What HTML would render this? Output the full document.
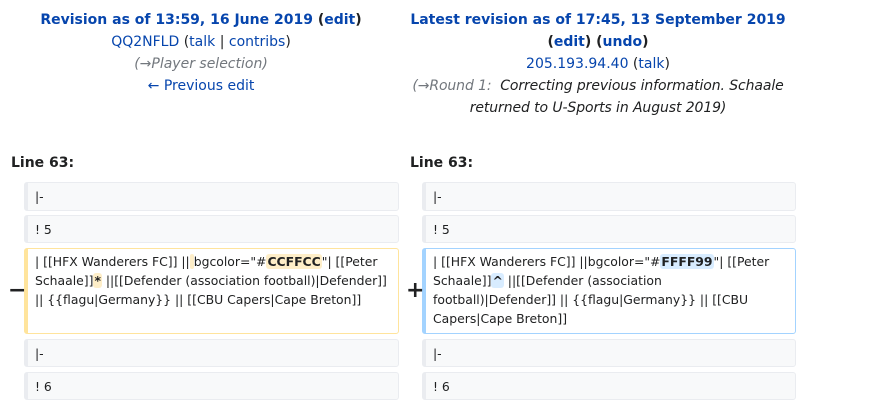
<!DOCTYPE html>
<html><head><meta charset="utf-8"><style>
body{margin:0;width:874px;height:404px;background:#fff;font-family:"DejaVu Sans","Liberation Sans",sans-serif;color:#202122;position:relative;overflow:hidden}
.h{position:absolute;text-align:center;font-size:14px;line-height:22px}
a{color:#0645ad;text-decoration:none}
.b{font-weight:bold}
.c{color:#72777d;font-style:italic}
.c i{color:#202122}
.ln{position:absolute;font-weight:bold;font-size:14px}
.box{position:absolute;box-sizing:border-box;border:1px solid #eaecf0;border-left:4px solid #eaecf0;border-radius:3px;background:#f8f9fa;font-size:12.4px;line-height:19px;padding:4px 8px 4px 7px;white-space:normal}
.del{background:#fff;border-color:#ffe49c}
.add{background:#fff;border-color:#a3d3ff}
.del b{background:#feeec8;border-radius:3px;padding:0 1px}
.add b{background:#d8ecff;border-radius:3px;padding:0 1px}
.m{position:absolute;font-size:22px;font-weight:bold;color:#202122}
</style></head><body>
<div class="h" style="left:0;width:402px;top:9px">
<div class="b"><a>Revision as of 13:59, 16 June 2019</a> (<a>edit</a>)</div>
<div><a>QQ2NFLD</a> (<a>talk</a> | <a>contribs</a>)</div>
<div class="c">(→Player selection)</div>
<div><a>← Previous edit</a></div>
</div>
<div class="h" style="left:400px;width:396px;top:9px">
<div class="b"><a>Latest revision as of 17:45, 13 September 2019</a><br>(<a>edit</a>) (<a>undo</a>)</div>
<div><a>205.193.94.40</a> (<a>talk</a>)</div>
<div class="c" style="letter-spacing:-0.1px">(→Round 1:&nbsp; <i>Correcting previous information. Schaale returned to U-Sports in August 2019)</i></div>
</div>
<div class="ln" style="left:11px;top:155px">Line 63:</div>
<div class="ln" style="left:410px;top:155px">Line 63:</div>

<div class="box" style="left:24px;top:182px;width:375px;height:29px">|-</div>
<div class="box" style="left:24px;top:215px;width:375px;height:28px">! 5</div>
<div class="box del" style="left:24px;top:248px;width:375px;height:86px;padding-top:3px">| [[HFX Wanderers FC]] ||<b style="padding:0 2px"></b>bgcolor="#<b>CCFFCC</b>"| [[Peter Schaale]]<b>*</b> ||[[Defender (association football)|Defender]] || {{flagu|Germany}} || [[CBU Capers|Cape Breton]]</div>
<div class="box" style="left:24px;top:339px;width:375px;height:28px">|-</div>
<div class="box" style="left:24px;top:372px;width:375px;height:28px">! 6</div>
<div class="m" style="left:8px;top:278px">−</div>

<div class="box" style="left:422px;top:182px;width:374px;height:29px">|-</div>
<div class="box" style="left:422px;top:215px;width:374px;height:28px">! 5</div>
<div class="box add" style="left:422px;top:248px;width:374px;height:86px;padding-top:3px">| [[HFX Wanderers FC]] ||bgcolor="#<b>FFFF99</b>"| [[Peter Schaale]]<b>^</b> ||[[Defender (association<br>football)|Defender]] || {{flagu|Germany}} || [[CBU<br>Capers|Cape Breton]]</div>
<div class="box" style="left:422px;top:339px;width:374px;height:28px">|-</div>
<div class="box" style="left:422px;top:372px;width:374px;height:28px">! 6</div>
<div class="m" style="left:406px;top:278px">+</div>
</body></html>
